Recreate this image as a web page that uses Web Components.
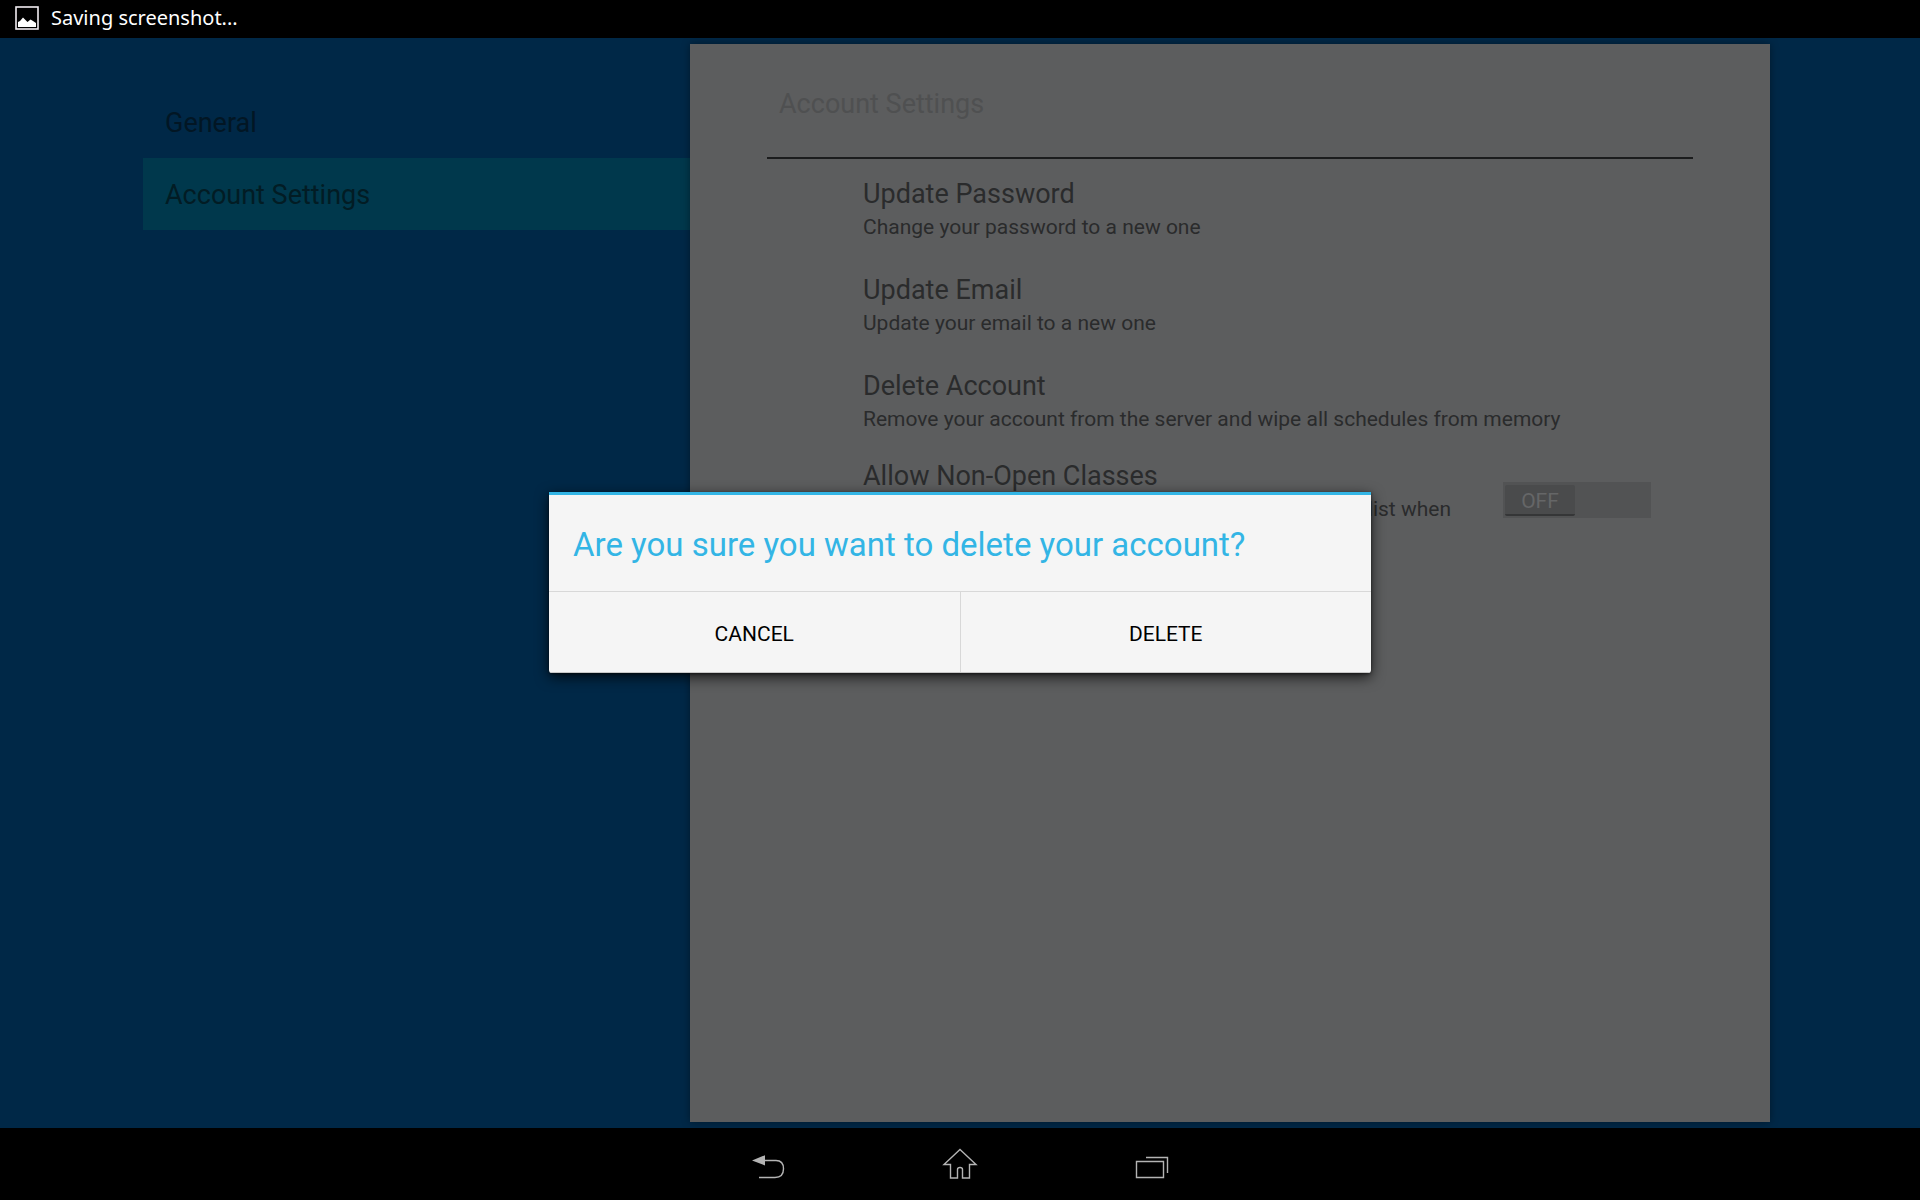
<!DOCTYPE html>
<html lang="en">
<head>
<meta charset="utf-8">
<meta name="viewport" content="width=device-width, initial-scale=1">
<title>Account Settings</title>
<style>
  html, body { height: 100%; margin: 0; }
  body { background: #002847; font-family: Roboto, "Noto Sans", sans-serif; }
</style>
</head>
<body>
<settings-screen></settings-screen>
<script>
const define = (name, html) => {
  const template = document.createElement('template');
  template.innerHTML = html;
  customElements.define(name, class extends HTMLElement {
    constructor() {
      super();
      this.attachShadow({ mode: 'open' }).append(template.content.cloneNode(true));
    }
  });
};

define('status-bar', `
<style>
  :host { display: flex; align-items: center; gap: 12px; height: 38px; padding: 0 15px 2px; background: #000; color: #fff;
    font: 20px/28px "Noto Sans", sans-serif; box-sizing: border-box; }
  svg { display: block; }
</style>
<svg width="24" height="24" viewBox="0 0 24 24" aria-hidden="true">
  <rect x="1" y="1" width="22" height="22" fill="none" stroke="#f2edf2" stroke-width="1.6"/>
  <path d="M3 21v-5l2-1 3-3.5 3 3 1.500 1.500 3-2.500 2.500 1.500 3 2v4z" fill="#fff"/>
</svg>
<span><slot></slot></span>`);

define('nav-item', `
<style>
  :host { display: block; }
  a { display: block; padding: 2px 22px 0; font-size: 27px; line-height: 70px; color: #021624; text-decoration: none; }
  :host([selected]) a { background: #00384c; color: #021c24; }
</style>
<a href="#"><slot></slot></a>`);

define('setting-row', `
<style>
  :host { display: flex; align-items: center; min-height: 96px; padding: 2px 42px 0 96px; box-sizing: border-box; }
  .text { flex: 1; color: #2a2b2c; }
  .title { font-size: 27px; line-height: 38px; }
  .desc { font-size: 21px; line-height: 28px; }
  :host([wrap]) { gap: 52px; padding-top: 10px; padding-bottom: 10px; }
  :host([wrap]) .text { min-height: 86px; }
  :host([wrap]) .desc { text-align: right; }
</style>
<div class="text">
  <div class="title"><slot name="title"></slot></div>
  <div class="desc"><slot></slot></div>
</div>
<slot name="widget"></slot>`);

define('toggle-switch', `
<style>
  :host { display: block; }
  label { position: relative; display: flex; width: 148px; height: 36px; padding: 3px 2px 2px; box-sizing: border-box; background: #525354; }
  input { position: absolute; inset: 0; width: 100%; height: 100%; margin: 0; opacity: 0; }
  span { width: 70px; border-radius: 2px; background: #4a4b4c; border-bottom: 2px solid #353637; box-sizing: border-box;
    text-align: center; font-size: 21px; line-height: 32px; color: #656667; }
</style>
<label><input type="checkbox" role="switch" aria-label="Allow Non-Open Classes"><span>OFF</span></label>`);

define('confirm-dialog', `
<style>
  :host { display: block; width: 822px; max-width: 90%; background: #f5f5f5; border-top: 3px solid #33b5e5; box-sizing: border-box;
    border-radius: 0 0 3px 3px; box-shadow: 0 4px 14px rgba(0,0,0,.75), 0 1px 3px rgba(0,0,0,.5); overflow: hidden; }
  h2 { margin: 0; padding: 4px 24px 0; font-size: 33px; line-height: 92px; font-weight: 400; color: #33b5e5; }
  .actions { display: flex; border-top: 1px solid #d8d8d8; border-bottom: 1px solid #c8c8c8; }
  button { flex: 1; height: 80px; border: 0; padding: 4px 0 0; background: none; font: 21px/28px Roboto, sans-serif; color: #000; }
  button:first-child { border-right: 1px solid #d8d8d8; }
</style>
<h2><slot></slot></h2>
<div class="actions"><button type="button">CANCEL</button><button type="button">DELETE</button></div>`);

define('system-nav', `
<style>
  :host { display: flex; justify-content: center; height: 72px; background: #000; }
  button { display: grid; place-items: center; width: 192px; border: 0; padding: 0; background: none; }
  svg { width: 36px; height: 36px; fill: none; stroke: #b4b4b4; stroke-width: 1.4; }
</style>
<button type="button" aria-label="Back"><svg viewBox="0 0 36 36"><path d="M14 14.500H26C31.500 14.500 33.500 17 33.500 22.800C33.500 28.500 31 31.500 25 31.500H9"/><path d="M2 14.500L15 9.200V19.500Z" fill="#b4b4b4" stroke="none"/></svg></button>
<button type="button" aria-label="Home"><svg viewBox="0 0 36 36"><path d="M18 3.500L34 18.500H27.500V32H20.500V23.500Q20.500 21.500 18 21.500Q15.500 21.500 15.500 23.500V32H8.500V18.500H2Z"/></svg></button>
<button type="button" aria-label="Recent apps"><svg viewBox="0 0 36 36"><path d="M2.500 15.500H29.500V31.500H2.500ZM12 11.500H33.500V27"/></svg></button>`);

define('settings-screen', `
<style>
  :host { display: flex; flex-direction: column; min-height: 100vh; }
  main { position: relative; flex: 1; display: grid; grid-template-columns: 547fr 1080fr; padding: 6px 150px 6px 143px; }
  nav { padding-top: 42px; }
  section { padding: 0 77px; background: #5c5d5e; box-sizing: border-box; box-shadow: 0 0 8px rgba(0,0,0,.4); }
  h1 { margin: 0; padding: 36px 12px 29px; font-size: 27px; line-height: 48px; font-weight: 400; color: #4f5051; border-bottom: 2px solid #1b1c1d; }
  .overlay { position: absolute; inset: 0; display: grid; place-items: center; padding-bottom: 1px; }
</style>
<status-bar>Saving screenshot...</status-bar>
<main>
  <nav>
    <nav-item>General</nav-item>
    <nav-item selected>Account Settings</nav-item>
  </nav>
  <section>
    <h1>Account Settings</h1>
    <setting-row><span slot="title">Update Password</span>Change your password to a new one</setting-row>
    <setting-row><span slot="title">Update Email</span>Update your email to a new one</setting-row>
    <setting-row><span slot="title">Delete Account</span>Remove your account from the server and wipe all schedules from memory</setting-row>
    <setting-row wrap><span slot="title">Allow Non-Open Classes</span>list when<toggle-switch slot="widget"></toggle-switch></setting-row>
  </section>
  <div class="overlay"><confirm-dialog>Are you sure you want to delete your account?</confirm-dialog></div>
</main>
<system-nav></system-nav>`);
</script>
</body>
</html>
